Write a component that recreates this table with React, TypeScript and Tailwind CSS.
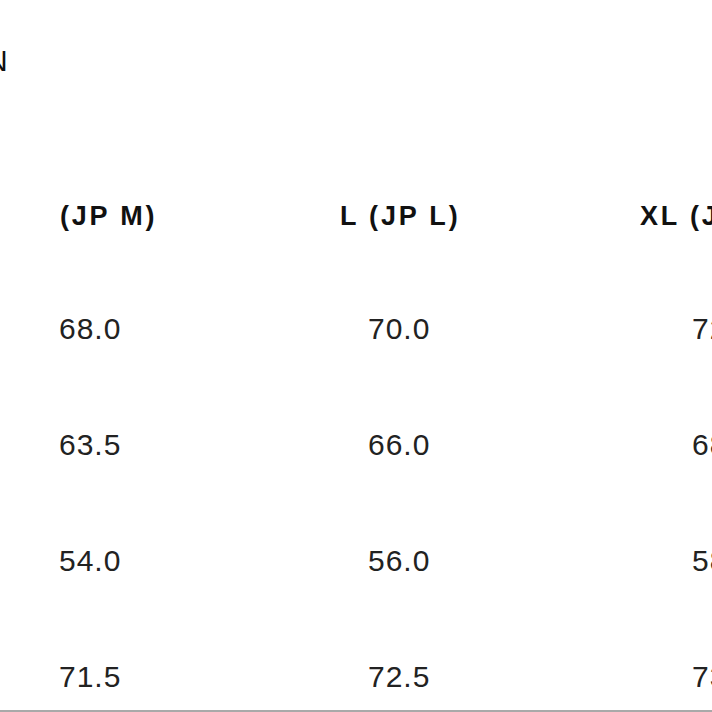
const HEADERS = [
  { label: "(JP M)", pad: "pl-[60px]" },
  { label: "L (JP L)", pad: "pl-[340px]" },
  { label: "XL (JP XL)", pad: "pl-[640px]" },
];

const ROWS = [
  ["68.0", "70.0", "72.0"],
  ["63.5", "66.0", "68.5"],
  ["54.0", "56.0", "58.0"],
  ["71.5", "72.5", "73.5"],
];

const DATA_PADS = ["pl-[59px]", "pl-[368px]", "pl-[692px]"];

export default function App() {
  return (
    <div className="relative w-[712px] h-[712px] overflow-hidden bg-white border-b-2 border-[#a9a9a9] font-['Liberation_Sans',Arial,sans-serif]">
      {/* 切れた見出し */}
      <div className="pt-[46px] ml-[-14px] text-[30px] leading-none text-[#111]">N</div>

      {/* サイズ見出し */}
      <div className="relative mt-[127px] h-[27px]">
        {HEADERS.map(({ label, pad }) => (
          <div
            key={label}
            className={`absolute left-0 top-0 ${pad} whitespace-nowrap text-[27px] leading-none font-bold tracking-[2.8px] text-[#111]`}
          >
            {label}
          </div>
        ))}
      </div>

      {/* 数値 */}
      <div className="mt-[41px]">
        {ROWS.map((row, r) => (
          <div key={r} className="relative h-[116px]">
            {row.map((v, c) => (
              <div
                key={c}
                className={`absolute left-0 top-0 ${DATA_PADS[c]} whitespace-nowrap text-[30px] leading-[116px] tracking-[1px] text-[#222]`}
              >
                {v}
              </div>
            ))}
          </div>
        ))}
      </div>
    </div>
  );
}
